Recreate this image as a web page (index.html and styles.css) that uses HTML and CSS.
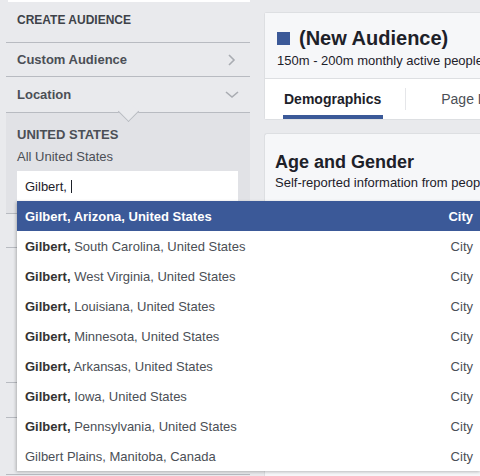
FILE: index.html
```html
<!DOCTYPE html>
<html lang="en">
<head>
  <meta charset="UTF-8">
  <meta name="viewport" content="width=device-width, initial-scale=1.0">
  <title>Audience Insights</title>
  <link rel="stylesheet" href="styles.css">
</head>
<body>
  <div class="sidebar">
    <div class="top-strip"></div>
    <div class="sidebar-title">CREATE AUDIENCE</div>

    <div class="nav-row custom-row">
      <span>Custom Audience</span>
      <svg class="chevron" width="10" height="12" viewBox="0 0 10 12"><path d="M2 1 L7 6 L2 11" fill="none" stroke="#a9acb2" stroke-width="1.6"/></svg>
    </div>

    <div class="nav-row location-row">
      <span>Location</span>
      <svg class="chevron" width="14" height="9" viewBox="0 0 14 9"><path d="M1 2 L7 7 L13 2" fill="none" stroke="#a9acb2" stroke-width="1.6"/></svg>
    </div>

    <div class="location-panel">
      <div class="country">UNITED STATES</div>
      <div class="country-sub">All United States</div>
      <div class="search-wrap">
        <div class="search-input">Gilbert,&nbsp;<span class="caret"></span></div>

        <div class="dropdown">
          <div class="dropdown-row active"><span><b>Gilbert,</b> Arizona, United States</span><span>City</span></div>
          <div class="dropdown-row"><span><b>Gilbert,</b> South Carolina, United States</span><span>City</span></div>
          <div class="dropdown-row"><span><b>Gilbert,</b> West Virginia, United States</span><span>City</span></div>
          <div class="dropdown-row"><span><b>Gilbert,</b> Louisiana, United States</span><span>City</span></div>
          <div class="dropdown-row"><span><b>Gilbert,</b> Minnesota, United States</span><span>City</span></div>
          <div class="dropdown-row"><span><b>Gilbert,</b> Arkansas, United States</span><span>City</span></div>
          <div class="dropdown-row"><span><b>Gilbert,</b> Iowa, United States</span><span>City</span></div>
          <div class="dropdown-row"><span><b>Gilbert,</b> Pennsylvania, United States</span><span>City</span></div>
          <div class="dropdown-row"><span>Gilbert Plains, Manitoba, Canada</span><span>City</span></div>
        </div>
      </div>
    </div>

    <div class="nav-row h34"></div>
    <div class="nav-row h135"></div>
    <div class="nav-row h35"></div>
    <div class="nav-row h56"></div>
    <div class="nav-row h34"></div>
  </div>

  <div class="main">
    <div class="card summary-card">
      <div class="summary-head">
        <div class="audience-name"><span class="swatch"></span>(New Audience)</div>
        <div class="audience-size">150m - 200m monthly active people</div>
      </div>
      <div class="tabs">
        <div class="tab selected">Demographics</div>
        <div class="tab-divider"></div>
        <div class="tab">Page Likes</div>
      </div>
    </div>

    <div class="card section-card">
      <div class="section-title">Age and Gender</div>
      <div class="section-sub">Self-reported information from people</div>
    </div>
  </div>
</body>
</html>
```

FILE: styles.css
```css
* {
  margin: 0;
  padding: 0;
  box-sizing: border-box;
  font-family: 'Liberation Sans', Arial, sans-serif;
}

body {
  background-color: #e9eaed;
  color: #4b4f56;
  height: 476px;
  overflow: hidden;
  display: flex;
}

.sidebar {
  width: 244px;
  flex-shrink: 0;
  margin-left: 6px;
}

.top-strip {
  height: 2px;
  margin-left: 2px;
  background: #fff;
}

.sidebar-title {
  height: 40px;
  display: flex;
  align-items: center;
  padding: 0 11px 5px;
  font-size: 12px;
  font-weight: bold;
  color: #3e4249;
}

.nav-row {
  display: flex;
  align-items: center;
  justify-content: space-between;
  padding: 0 11px;
  border-top: 1px solid #b8bbc1;
  font-size: 13px;
  font-weight: bold;
  color: #4b4f56;
}

.custom-row {
  height: 34px;
}

.custom-row .chevron {
  margin-right: 2px;
}

.location-row {
  height: 36px;
}

.location-panel {
  position: relative;
  border-top: 1px solid #b8bbc1;
  background: #e1e2e6;
  padding: 14px 11px 12px;
}

/* notch under the Location row */
.location-panel::before {
  content: '';
  position: absolute;
  top: -9px;
  left: 115px;
  width: 14px;
  height: 14px;
  background: #e9eaed;
  border-right: 1px solid #b8bbc1;
  border-bottom: 1px solid #b8bbc1;
  transform: rotate(45deg);
}

.country {
  font-size: 13px;
  font-weight: bold;
  line-height: 16px;
  color: #4b4f56;
}

.country-sub {
  font-size: 13px;
  line-height: 16px;
  margin-top: 6px;
  color: #4b4f56;
}

.search-wrap {
  position: relative;
  margin-top: 6px;
  width: 221px;
}

.search-input {
  height: 30px;
  background: #fff;
  display: flex;
  align-items: center;
  padding: 0 8px;
  font-size: 13px;
  color: #1d2129;
}

.caret {
  display: inline-block;
  width: 1px;
  height: 13px;
  background: #1d2129;
}

.dropdown {
  position: absolute;
  top: 30px;
  left: 0;
  width: 464px;
  background: #fff;
  box-shadow: -1px 1px 3px rgba(0, 0, 0, 0.25);
  z-index: 10;
}

.dropdown-row {
  height: 30px;
  display: flex;
  align-items: center;
  justify-content: space-between;
  padding: 0 8px;
  font-size: 13px;
  color: #4b4f56;
}

.dropdown-row b {
  color: #333;
}

.dropdown-row.active {
  background: #3b5998;
  color: #fff;
  font-weight: bold;
}

.dropdown-row.active b {
  color: #fff;
}

.h34 { height: 34px; }
.h135 { height: 135px; }
.h35 { height: 35px; }
.h56 { height: 57px; }

.main {
  flex: 1;
  min-width: 0;
  padding: 12px 0 0 14px;
  display: flex;
  flex-direction: column;
  gap: 13px;
}

.card {
  width: 260px;
  flex-shrink: 0;
  border: 1px solid #dddfe2;
  border-right: none;
  border-radius: 3px 0 0 3px;
}

.summary-head {
  height: 66px;
  background: #f6f7f9;
  border-bottom: 1px solid #dddfe2;
  padding: 13px 12px 0;
}

.audience-name {
  display: flex;
  align-items: center;
  font-size: 20px;
  font-weight: bold;
  color: #1d2129;
  line-height: 24px;
}

.swatch {
  width: 13px;
  height: 13px;
  background: #3b5998;
  margin-right: 9px;
}

.audience-size {
  font-size: 13px;
  color: #1d2129;
  margin-top: 3px;
  white-space: nowrap;
}

.tabs {
  height: 40px;
  background: #fff;
  display: flex;
  align-items: center;
  padding-left: 18px;
}

.tab {
  font-size: 14px;
  color: #4b4f56;
  height: 40px;
  display: flex;
  align-items: center;
  white-space: nowrap;
}

.tab.selected {
  font-weight: bold;
  color: #1d2129;
  border-bottom: 4px solid #3b5998;
  padding: 4px 2px 0 1px;
}

.tab-divider {
  width: 1px;
  height: 22px;
  background: #e5e6e9;
  margin: 0 35px 0 22px;
  flex-shrink: 0;
}

.section-card {
  background: #f6f7f9;
  height: 400px;
  padding: 18px 10px;
}

.section-title {
  font-size: 18px;
  font-weight: bold;
  color: #1d2129;
  line-height: 20px;
}

.section-sub {
  font-size: 13px;
  color: #1d2129;
  margin-top: 3px;
  white-space: nowrap;
}
```
